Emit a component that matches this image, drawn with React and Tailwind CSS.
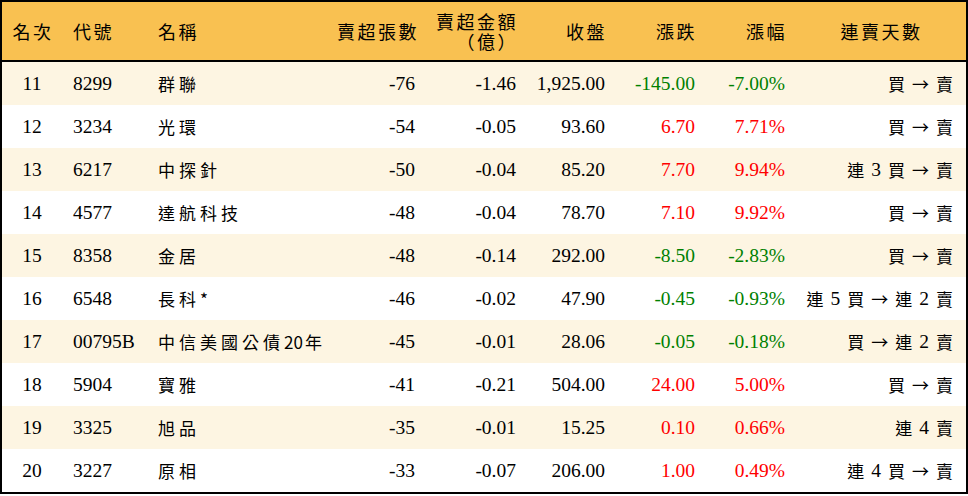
import React from "react";

const rows = [
  { rank: 11, code: "8299", name: "群聯", lots: "-76", amt: "-1.46", close: "1,925.00", chg: "-145.00", pct: "-7.00%", streak: ["買", "→", "賣"] },
  { rank: 12, code: "3234", name: "光環", lots: "-54", amt: "-0.05", close: "93.60", chg: "6.70", pct: "7.71%", streak: ["買", "→", "賣"] },
  { rank: 13, code: "6217", name: "中探針", lots: "-50", amt: "-0.04", close: "85.20", chg: "7.70", pct: "9.94%", streak: ["連", "3", "買", "→", "賣"] },
  { rank: 14, code: "4577", name: "達航科技", lots: "-48", amt: "-0.04", close: "78.70", chg: "7.10", pct: "9.92%", streak: ["買", "→", "賣"] },
  { rank: 15, code: "8358", name: "金居", lots: "-48", amt: "-0.14", close: "292.00", chg: "-8.50", pct: "-2.83%", streak: ["買", "→", "賣"] },
  { rank: 16, code: "6548", name: "長科*", lots: "-46", amt: "-0.02", close: "47.90", chg: "-0.45", pct: "-0.93%", streak: ["連", "5", "買", "→", "連", "2", "賣"] },
  { rank: 17, code: "00795B", name: "中信美國公債20年", lots: "-45", amt: "-0.01", close: "28.06", chg: "-0.05", pct: "-0.18%", streak: ["買", "→", "連", "2", "賣"] },
  { rank: 18, code: "5904", name: "寶雅", lots: "-41", amt: "-0.21", close: "504.00", chg: "24.00", pct: "5.00%", streak: ["買", "→", "賣"] },
  { rank: 19, code: "3325", name: "旭品", lots: "-35", amt: "-0.01", close: "15.25", chg: "0.10", pct: "0.66%", streak: ["連", "4", "賣"] },
  { rank: 20, code: "3227", name: "原相", lots: "-33", amt: "-0.07", close: "206.00", chg: "1.00", pct: "0.49%", streak: ["連", "4", "買", "→", "賣"] },
];

const cols = "grid grid-cols-[60px_85px_183px_95px_101px_89px_90px_90px_171px]";
const cjk = "font-['Noto_Sans_CJK_TC',sans-serif]";
const num = "font-['Liberation_Serif',serif] text-[19.5px]";

// digits inside a name stay tight, the CJK characters keep their wide spacing
const Name = ({ text }) => (
  <>
    {text.split(/(\d+)/).map((part, i) =>
      /\d/.test(part) ? (
        <span key={i} className="tracking-normal mr-[2px]">{part}</span>
      ) : (
        <span key={i}>{part}</span>
      )
    )}
  </>
);

const Streak = ({ tokens }) => (
  <div className="flex items-center justify-end gap-[7px] pr-[13px]">
    {tokens.map((t, i) =>
      /[0-9]/.test(t) ? (
        <span key={i} className={num}>{t}</span>
      ) : (
        <span key={i} className={`${cjk} text-[17px]`}>{t}</span>
      )
    )}
  </div>
);

export default function App() {
  return (
    <div className="w-[968px] h-[496px] bg-white">
      <div className="border-2 border-black text-black">
        <div className={`${cols} h-[60px] items-center bg-[#f9c151] border-b-2 border-black ${cjk} text-[18px] tracking-[2.5px]`}>
          <div className="text-center pl-[2px]">名次</div>
          <div className="pl-[11px]">代號</div>
          <div className="pl-[11px]">名稱</div>
          <div className="text-right pr-[6px]">賣超張數</div>
          <div className="text-right pr-[8px] leading-[20px]">
            賣超金額
            <br />
            （億）
          </div>
          <div className="text-right pr-[8px]">收盤</div>
          <div className="text-right pr-[8px]">漲跌</div>
          <div className="text-right pr-[8px]">漲幅</div>
          <div className="text-center pl-[2px]">連賣天數</div>
        </div>
        {rows.map((r, i) => {
          const up = !r.chg.startsWith("-");
          const tone = up ? "text-[#ff0000]" : "text-[#008000]";
          return (
            <div
              key={r.rank}
              className={`${cols} h-[43px] items-center ${i % 2 === 0 ? "bg-[#fdf5e2]" : "bg-white"}`}
            >
              <div className={`${num} text-center`}>{r.rank}</div>
              <div className={`${num} pl-[11px]`}>{r.code}</div>
              <div className={`${cjk} text-[17px] tracking-[4px] pl-[11px] whitespace-nowrap`}>
                <Name text={r.name} />
              </div>
              <div className={`${num} text-right pr-[10px]`}>{r.lots}</div>
              <div className={`${num} text-right pr-[10px]`}>{r.amt}</div>
              <div className={`${num} text-right pr-[10px]`}>{r.close}</div>
              <div className={`${num} text-right pr-[10px] ${tone}`}>{r.chg}</div>
              <div className={`${num} text-right pr-[10px] ${tone}`}>{r.pct}</div>
              <Streak tokens={r.streak} />
            </div>
          );
        })}
      </div>
    </div>
  );
}
